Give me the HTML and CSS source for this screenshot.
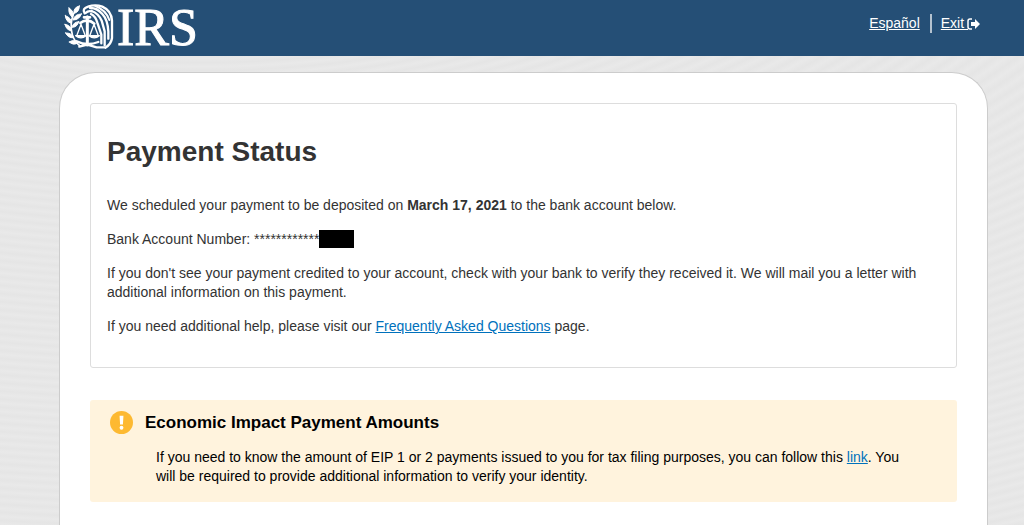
FILE: index.html
```html
<!DOCTYPE html>
<html lang="en">
  <head>
    <meta charset="UTF-8" />
    <meta name="viewport" content="width=device-width, initial-scale=1.0" />
    <title>Payment Status</title>
    <link rel="stylesheet" href="styles.css">
  </head>
  <body>
    <header class="site-header">
      <a class="logo" href="#" aria-label="IRS">
        <svg class="emblem" viewBox="0 0 162 150" fill="none" stroke="#fff" stroke-linecap="round" stroke-linejoin="round" aria-hidden="true">
          <g fill="#fff" stroke-width="3">
            <path d="M52 12 Q34 16 36 34 Q52 31 52 12Z" />
            <path d="M21 18 Q18 35 31 46 Q39 29 21 18Z" />
            <path d="M58 36 Q38 36 33 54 Q52 54 58 36Z" />
            <path d="M10 41 Q11 59 28 64 Q29 47 10 41Z" />
            <path d="M50 59 Q34 60 30 76 Q46 76 50 59Z" />
            <path d="M9 67 Q12 84 29 87 Q27 70 9 67Z" />
            <path d="M11 93 Q18 109 35 107 Q29 92 11 93Z" />
            <path d="M22 120 Q34 132 48 122 Q36 110 22 120Z" />
          </g>
          <path stroke-width="5" d="M35 34 Q22 69 31 98 Q37 118 54 132" />
          <path stroke-width="7" d="M68 34 Q59 20 78 14 Q100 6 121 14 Q148 26 150 56 L150 108 Q148 126 130 137 M71 33 Q78 25 89 28" />
          <path stroke-width="7" d="M84 18 Q105 17 121 36 Q137 53 139 88 L139 110 M89 27 Q108 33 119 56 L128 88 L128 130 M87 36 Q101 43 106 62 L118 98 L118 124" />
          <path stroke-width="6" d="M100 12 Q132 24 142 54" />
          <path stroke-width="9" d="M76 44 L76 129" />
          <path stroke-width="8" d="M55 63 Q65 55 75 56 Q87 56 97 65 M66 46 L84 46" />
          <path stroke-width="4" d="M57 67 L45 99 M57 67 L69 99 M96 67 L84 99 M96 67 L108 99" />
          <path fill="#fff" stroke-width="4" d="M41 101 H72 Q57 114 41 101Z M81 101 H112 Q97 114 81 101Z" />
          <path stroke-width="7" d="M44 118 Q76 133 109 120 M52 134 L76 128 L104 136 L126 136" />
        </svg>
        <span class="logo-text">IRS</span>
      </a>
      <nav class="top-links">
        <a href="#" lang="es">Español</a>
        <a class="exit-link" href="#">Exit
          <svg class="exit-icon" viewBox="0 0 13 12" aria-hidden="true">
            <path fill="none" stroke="#fff" stroke-width="1.5" d="M5 1 H3 Q1 1 1 3 V9 Q1 11 3 11 H5" />
            <path fill="#fff" d="M4 4 H8 V1 L13 6 L8 11 V8 H4Z" />
          </svg>
        </a>
      </nav>
    </header>

    <main class="container">
      <section class="panel">
        <h1>Payment Status</h1>
        <p>We scheduled your payment to be deposited on <strong>March 17, 2021</strong> to the bank account below.</p>
        <p>Bank Account Number: ************<span class="redacted"></span></p>
        <p>If you don't see your payment credited to your account, check with your bank to verify they received it. We will mail you a letter with additional information on this payment.</p>
        <p>If you need additional help, please visit our <a href="#">Frequently Asked Questions</a> page.</p>
      </section>

      <section class="alert">
        <svg class="alert-icon" viewBox="0 0 24 24" aria-hidden="true">
          <circle cx="12" cy="12" r="12" fill="#fdb931" />
          <path d="M10 5 H14 L13.5 14 H10.5Z" fill="#fff" />
          <circle cx="12" cy="17.5" r="2" fill="#fff" />
        </svg>
        <div class="alert-body">
          <h2>Economic Impact Payment Amounts</h2>
          <p>If you need to know the amount of EIP 1 or 2 payments issued to you for tax filing purposes, you can follow this <a href="#">link</a>. You will be required to provide additional information to verify your identity.</p>
        </div>
      </section>
    </main>
  </body>
</html>
```
FILE: styles.css
```css
* {
  box-sizing: border-box;
}

body {
  display: flex;
  flex-direction: column;
  min-height: 100vh;
  margin: 0;
  background-color: #e8e8e8;
  background-image: repeating-radial-gradient(ellipse 900px 400px at 20% -30%, #e9e9e9 0, #e5e5e5 1%, #e9e9e9 2%);
  color: #333;
  font-family: "Liberation Sans", Arial, sans-serif;
  font-size: 14px;
  line-height: 19px;
}

a {
  color: #0071bc;
}

.site-header {
  display: flex;
  justify-content: space-between;
  align-items: flex-start;
  height: 56px;
  padding: 0 44px 0 62px;
  background-color: #254f76;
}

.logo {
  display: flex;
  color: #fff;
  text-decoration: none;
}

.emblem {
  width: 54px;
  height: 50px;
  margin-top: 2px;
}

.logo-text {
  padding-left: 1px;
  font-family: "Liberation Serif", "Times New Roman", serif;
  font-size: 52px;
  line-height: 56px;
  -webkit-text-stroke: 1px #fff;
}

.top-links {
  display: flex;
  padding-top: 14px;
}

.top-links a {
  color: #fff;
}

.top-links .exit-link {
  margin-left: 10px;
  padding-left: 9px;
  border-left: 2px solid #b4c2cf;
}

.exit-icon {
  width: 13px;
  height: 12px;
  margin-left: -1px;
  vertical-align: -2px;
}

.container {
  flex: 1;
  margin: 16px 36px 0 59px;
  padding: 30px 30px 20px;
  background-color: #fff;
  border: 1px solid #ccc;
  border-bottom: 0;
  border-radius: 36px 36px 0 0;
}

.panel {
  padding: 32px 16px 31px;
  border: 1px solid #ddd;
  border-radius: 3px;
}

h1 {
  margin: 0 0 28px;
  font-size: 28px;
  line-height: 32px;
}

p {
  margin: 0 0 15px;
}

.panel p:last-child {
  margin-bottom: 0;
}

.redacted {
  display: inline-block;
  width: 35px;
  height: 18px;
  background-color: #000;
  vertical-align: -4px;
}

.alert {
  display: flex;
  gap: 12px;
  margin-top: 32px;
  padding: 11px 40px 16px 20px;
  background-color: #fff3dd;
  border-radius: 3px;
  color: #000;
}

.alert-icon {
  flex: none;
  width: 23px;
  height: 23px;
}

h2 {
  margin: 0 0 14px;
  font-size: 17px;
  line-height: 23px;
}

.alert-body p {
  margin: 0;
  padding-left: 11px;
}
```
